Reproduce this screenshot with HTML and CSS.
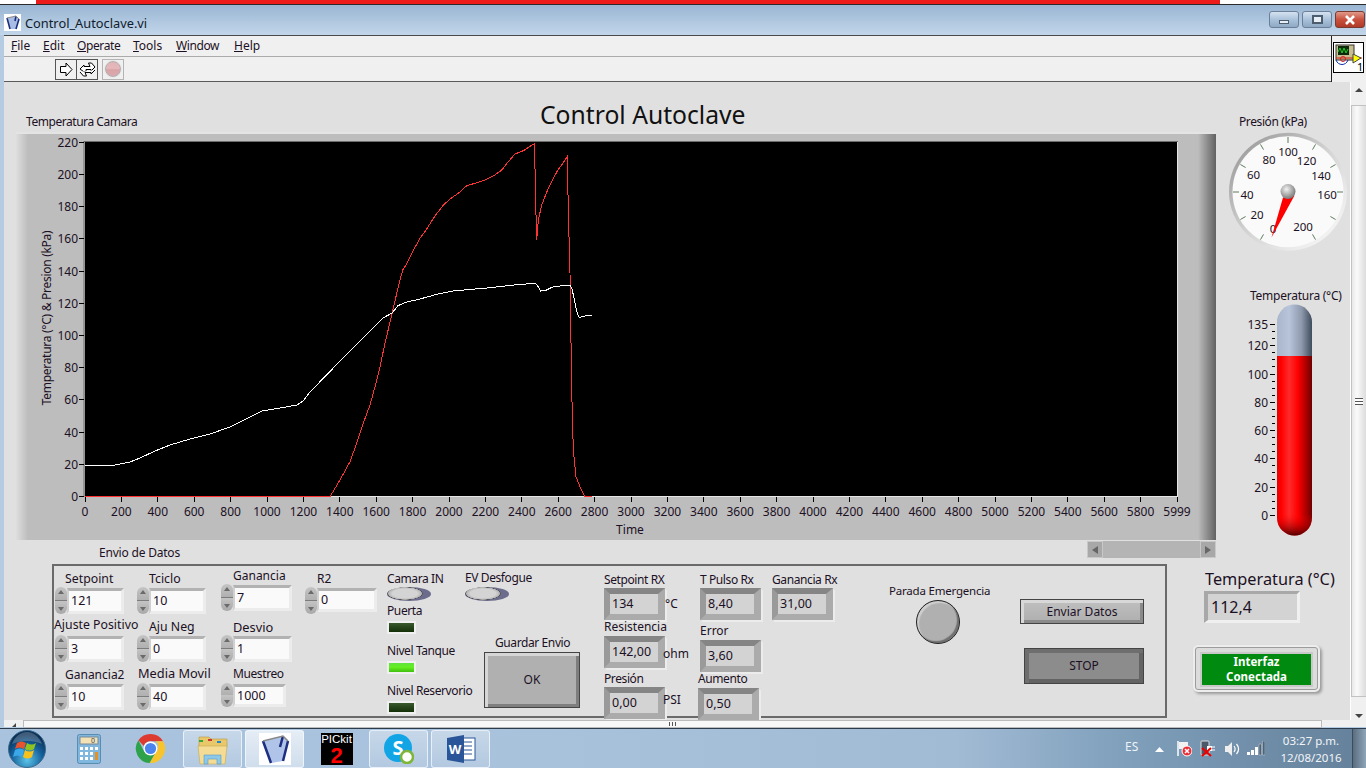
FILE: index.html
```html
<!DOCTYPE html>
<html lang="es">
<head>
<meta charset="utf-8">
<title>Control_Autoclave.vi</title>
<link rel="stylesheet" href="styles.css">
</head>
<body>
<div class="strip"><span class="strip-white"></span><span class="strip-red"></span></div>
<div class="window">
  <header class="titlebar">
    <svg class="title-icon" width="17" height="17" viewBox="0 0 17 17"><rect width="17" height="17" fill="#fff"/><path d="M3 4l9-2 3 3-3 10-6 0z" fill="#a9bde4"/><path d="M3 4l3 11M12 2l-1 5M15 5l-3 10" stroke="#1c2f80" stroke-width="1.6" fill="none"/><path d="M3 4l9-2 3 3" stroke="#8a8a8a" fill="none"/></svg>
    <span class="title-text">Control_Autoclave.vi</span>
    <div class="winbtns">
      <span class="winbtn"><i class="glyph-min"></i></span>
      <span class="winbtn"><i class="glyph-max"></i></span>
      <span class="winbtn winclose"><svg width="12" height="10" viewBox="0 0 12 10"><path d="M2 1l8 8M10 1l-8 8" stroke="#fff" stroke-width="2.6"/></svg></span>
    </div>
  </header>
  <div class="client">
    <nav class="menubar">
      <span><u>F</u>ile</span><span><u>E</u>dit</span><span class="tight"><u>O</u>perate</span><span><u>T</u>ools</span><span class="tight"><u>W</u>indow</span><span><u>H</u>elp</span>
    </nav>
    <div class="toolbar">
      <span class="tool"><svg width="14" height="15" viewBox="0 0 14 15"><path d="M1.500 4.500h5.500V1l6 6.500-6 6.500v-3.500H1.500z" fill="#fff" stroke="#000"/></svg></span>
      <span class="tool tool-second"><svg width="17" height="15" viewBox="0 0 17 15"><path d="M1 7l4-4v1.500h6L9.500 1h3l3.500 4-4 4V7.500H7v2H4.500z" fill="#fff" stroke="#000"/><path d="M16 8l-4 4v-1.500H6L7.500 14h-3L1 10" fill="#fff" stroke="#000"/></svg></span>
      <span class="tool-stop"><i></i></span>
    </div>
    <div class="vi-icon">
      <svg width="31" height="31" viewBox="0 0 31 31"><rect width="31" height="31" fill="#fff"/><rect x="3" y="3" width="18" height="15" fill="#c8bd8e" stroke="#333"/><rect x="5" y="4" width="11" height="9" fill="#0a2a0a"/><path d="M5 10l2-4 2 5 2-5 2 5 2-4" stroke="#20d020" fill="none"/><path d="M3 18c2 6 10 6 12 0" stroke="#1030b0" fill="none"/><circle cx="10" cy="17" r="2.500" fill="none" stroke="#d02020"/><path d="M3 16h26" stroke="#d02020"/><path d="M20 12l8 4-8 5z" fill="#ff0" stroke="#444"/><text class="vi-num" x="24" y="29">1</text></svg>
    </div>
    <div class="body-row">
      <main class="panel">
        <div class="top-row">
          <section class="graph-col">
            <div class="graph-head">
              <span class="graph-label">Temperatura Camara</span>
              <h1 class="main-title">Control Autoclave</h1>
            </div>
            <div class="graph">
              <svg class="graph-svg" width="1200" height="408" viewBox="16 132 1200 408">
                <rect x="85" y="142" width="1092" height="354" fill="#000"/>
                <path d="M84 141.500H1178M84 141v356" stroke="#6c6c6c" fill="none"/>
                <path d="M1177.500 142v355M85 496.500h1093" stroke="#e6e6e6" fill="none"/>
                <path class="tick" d="M79 142.500h5M79 174.500h5M79 206.500h5M79 238.500h5M79 271.500h5M79 303.500h5M79 335.500h5M79 367.500h5M79 399.500h5M79 432.500h5M79 464.500h5M79 496.500h5"/>
                <path class="tick" d="M85.500 497v5M121.500 497v5M157.500 497v5M194.500 497v5M230.500 497v5M267.500 497v5M303.500 497v5M339.500 497v5M376.500 497v5M412.500 497v5M449.500 497v5M485.500 497v5M521.500 497v5M558.500 497v5M594.500 497v5M631.500 497v5M667.500 497v5M703.500 497v5M740.500 497v5M776.500 497v5M813.500 497v5M849.500 497v5M885.500 497v5M922.500 497v5M958.500 497v5M995.500 497v5M1031.500 497v5M1067.500 497v5M1104.500 497v5M1140.500 497v5M1177.500 497v5"/>
                <g class="ylab">
                  <text x="78" y="147">220</text><text x="78" y="179">200</text><text x="78" y="211">180</text><text x="78" y="243">160</text><text x="78" y="276">140</text><text x="78" y="308">120</text><text x="78" y="340">100</text><text x="78" y="372">80</text><text x="78" y="404">60</text><text x="78" y="437">40</text><text x="78" y="469">20</text><text x="78" y="501">0</text>
                </g>
                <g class="xlab">
                  <text x="85" y="515.500">0</text><text x="121.400" y="515.500">200</text><text x="157.800" y="515.500">400</text><text x="194.200" y="515.500">600</text><text x="230.600" y="515.500">800</text><text x="267" y="515.500">1000</text><text x="303.400" y="515.500">1200</text><text x="339.800" y="515.500">1400</text><text x="376.200" y="515.500">1600</text><text x="412.600" y="515.500">1800</text><text x="449" y="515.500">2000</text><text x="485.400" y="515.500">2200</text><text x="521.800" y="515.500">2400</text><text x="558.200" y="515.500">2600</text><text x="594.600" y="515.500">2800</text><text x="631" y="515.500">3000</text><text x="667.400" y="515.500">3200</text><text x="703.800" y="515.500">3400</text><text x="740.200" y="515.500">3600</text><text x="776.600" y="515.500">3800</text><text x="813" y="515.500">4000</text><text x="849.400" y="515.500">4200</text><text x="885.800" y="515.500">4400</text><text x="922.200" y="515.500">4600</text><text x="958.600" y="515.500">4800</text><text x="995" y="515.500">5000</text><text x="1031.400" y="515.500">5200</text><text x="1067.800" y="515.500">5400</text><text x="1104.200" y="515.500">5600</text><text x="1140.600" y="515.500">5800</text><text x="1177" y="515.500">5999</text>
                  <text x="630" y="533.500">Time</text>
                </g>
                <text class="xlab axis-title" transform="translate(51 318) rotate(-90)">Temperatura (°C) &amp; Presion (kPa)</text>
                <polyline class="trace-red" points="85,496.700 330,496.700 340,480 350,461.700 356.700,443.300 363.300,423.300 370,405 375,386.700 380,366.700 385,343.300 391.700,315 398.300,286.700 402.700,270 406,265 410,256.700 415,247.300 420,238.300 426,230 435,216 443.300,205 451.700,197.700 458.300,193.300 466.700,185.700 475,183.300 483.300,180.700 495,175 501.700,170 508.300,161.700 515,154 523.300,150.700 533.300,144.300 534.500,144 535.700,203.300 536.700,240 538.300,220 541.700,205 548.300,188.300 553.300,178.300 558.300,169.300 563.300,162.700 567.300,156.700 568.300,210 570,273.300 571.700,390 573.300,450 576,476.700 580,486.700 585,496.700 592,496.700"/>
                <polyline class="trace-white" points="85,465 115,465 130,462 140,458 155,451 170,445 190,439 210,434 230,427 250,417 262,411 280,408 297,405 303,401 310,392 320,381.700 343,358 363,338 383,318 392,313 398,305.700 401.700,304 407,302 420,299 436.700,294.300 453,291 486.700,288 516.700,284.700 535,283.300 537,285 540.700,291 545,290.700 553.300,286.700 570,285 572.300,290 575,303.300 577.300,313.300 579.300,317.300 586.700,315.700 591.700,315"/>
              </svg>
            </div>
            <div class="under-graph">
              <span class="envio-label">Envio de Datos</span>
              <div class="hscroll"><span class="hs-btn"><i class="tri-left"></i></span><span class="hs-track"></span><span class="hs-btn"><i class="tri-right"></i></span></div>
            </div>
          </section>
          <aside class="gauges">
            <div class="presion-label">Presión (kPa)</div>
            <svg class="gauge" width="124" height="124" viewBox="1226 130 124 124">
              <defs>
                <linearGradient id="rim" x1="0" y1="0" x2="1" y2="1"><stop offset="0" stop-color="#8e8e8e"/><stop offset="0.5" stop-color="#d4d4d4"/><stop offset="1" stop-color="#fff"/></linearGradient>
                <radialGradient id="cap" cx="0.4" cy="0.35" r="0.7"><stop offset="0" stop-color="#f2f2f2"/><stop offset="1" stop-color="#707070"/></radialGradient>
              </defs>
              <circle cx="1288" cy="191.700" r="59" fill="url(#rim)"/>
              <circle cx="1288" cy="191.700" r="55.500" fill="#fafafa"/>
              <path class="gauge-tick" d="M1288 143v-6M1263.500 149.600l-3-5.200M1245.600 167.500l-5.200-3M1239 192h-6M1245.600 216.500l-5.200 3M1263.500 234.400l-3 5.200M1312.500 149.600l3-5.200M1330.400 167.500l5.200-3M1337 192h6M1330.400 216.500l5.200 3M1312.500 234.400l3 5.200"/>
              <g class="gauge-num">
                <text x="1288" y="156">100</text><text x="1269" y="164">80</text><text x="1253.500" y="179">60</text><text x="1247" y="199">40</text><text x="1257" y="219">20</text><text x="1273" y="233">0</text><text x="1303" y="231">200</text><text x="1327" y="199">160</text><text x="1321" y="180">140</text><text x="1306.500" y="165">120</text>
              </g>
              <path d="M1283 197.500l11.500-2L1271.500 237.500z" fill="#f00"/>
              <circle cx="1288" cy="191.500" r="7.500" fill="url(#cap)"/>
            </svg>
            <div class="termo-label">Temperatura (°C)</div>
            <svg class="termo" width="90" height="234" viewBox="1240 303 90 234">
              <defs>
                <linearGradient id="tblue"><stop offset="0" stop-color="#aab6cc"/><stop offset="0.35" stop-color="#b8c4da"/><stop offset="0.7" stop-color="#8e99ad"/><stop offset="1" stop-color="#3e4c5c"/></linearGradient>
                <linearGradient id="tred"><stop offset="0" stop-color="#e80000"/><stop offset="0.12" stop-color="#ff0000"/><stop offset="0.35" stop-color="#ff2a2a"/><stop offset="0.6" stop-color="#ff0000"/><stop offset="1" stop-color="#6e0000"/></linearGradient>
                <linearGradient id="tbot" x1="0" y1="0" x2="0" y2="1"><stop offset="0" stop-color="#ff0000" stop-opacity="0"/><stop offset="1" stop-color="#500000"/></linearGradient>
              </defs>
              <path d="M1277 356v-34a17.500 17.500 0 0 1 35 0v34z" fill="url(#tblue)"/>
              <path d="M1277 356v162a17.500 17.500 0 0 0 35 0V356z" fill="url(#tred)"/>
              <path d="M1277 514v4a17.500 17.500 0 0 0 35 0v-4z" fill="url(#tbot)"/>
              <path class="tick" d="M1270 324.500h5M1270 345.500h5M1270 374.500h5M1270 402.500h5M1270 430.500h5M1270 458.500h5M1270 487.500h5M1270 515.500h5M1272 331.500h3M1272 338.500h3M1272 352.500h3M1272 359.500h3M1272 366.500h3M1272 381.500h3M1272 388.500h3M1272 395.500h3M1272 409.500h3M1272 416.500h3M1272 423.500h3M1272 437.500h3M1272 444.500h3M1272 451.500h3M1272 465.500h3M1272 472.500h3M1272 479.500h3M1272 494.500h3M1272 501.500h3M1272 508.500h3"/>
              <g class="ylab">
                <text x="1268" y="329">135</text><text x="1268" y="350">120</text><text x="1268" y="379">100</text><text x="1268" y="407">80</text><text x="1268" y="435">60</text><text x="1268" y="463">40</text><text x="1268" y="492">20</text><text x="1268" y="520">0</text>
              </g>
            </svg>
          </aside>
        </div>
        <div class="bottom-row">
          <section class="data">
            <div class="col col1">
              <div class="field"><label class="lb big i10">Setpoint</label><div class="num"><span class="spin"></span><span class="numbox">121</span></div></div>
              <div class="field"><label class="lb up2 big neg1">Ajuste Positivo</label><div class="num"><span class="spin"></span><span class="numbox">3</span></div></div>
              <div class="field"><label class="lb i10">Ganancia2</label><div class="num"><span class="spin"></span><span class="numbox">10</span></div></div>
            </div>
            <div class="col col2">
              <div class="field"><label class="lb big i12">Tciclo</label><div class="num"><span class="spin"></span><span class="numbox">10</span></div></div>
              <div class="field"><label class="lb big i12">Aju Neg</label><div class="num"><span class="spin"></span><span class="numbox">0</span></div></div>
              <div class="field"><label class="lb up2 i1 bigger">Media Movil</label><div class="num"><span class="spin"></span><span class="numbox">40</span></div></div>
            </div>
            <div class="col col3">
              <div class="field raised"><label class="lb i12">Ganancia</label><div class="num"><span class="spin"></span><span class="numbox wide">7</span></div></div>
              <div class="field"><label class="lb bigger i12">Desvio</label><div class="num"><span class="spin"></span><span class="numbox wide">1</span></div></div>
              <div class="field"><label class="lb up1 i12 tight">Muestreo</label><div class="num"><span class="spin short"></span><span class="numbox short">1000</span></div></div>
            </div>
            <div class="col col4">
              <div class="field"><label class="lb i12">R2</label><div class="num"><span class="spin"></span><span class="numbox slim">0</span></div></div>
            </div>
            <div class="col col5">
              <label class="lb tight">Camara IN</label>
              <span class="toggle"></span>
              <div class="ledgroup"><label class="lb-plain tight">Puerta</label><span class="led"></span></div>
              <div class="ledgroup"><label class="lb-plain tight">Nivel Tanque</label><span class="led led-on"></span></div>
              <div class="ledgroup"><label class="lb-plain tight">Nivel Reservorio</label><span class="led"></span></div>
            </div>
            <div class="col col6">
              <label class="lb up1 tight">EV Desfogue</label>
              <span class="toggle"></span>
              <label class="lb-plain guardar tight">Guardar Envio</label>
              <button class="okbtn" type="button">OK</button>
            </div>
            <div class="col col7">
              <label class="lb ind-first tight">Setpoint RX</label>
              <div class="indrow"><span class="ind">134</span><span class="unit">°C</span></div>
              <label class="lb ind-gap16">Resistencia</label>
              <div class="indrow"><span class="ind">142,00</span><span class="unit unit-ohm">ohm</span></div>
              <label class="lb ind-gap19 tight">Presión</label>
              <div class="indrow"><span class="ind">0,00</span><span class="unit unit-psi">PSI</span></div>
            </div>
            <div class="col col8">
              <label class="lb ind-first tight">T Pulso Rx</label>
              <span class="ind">8,40</span>
              <label class="lb ind-gap20">Error</label>
              <span class="ind">3,60</span>
              <label class="lb ind-gap16 shift tight">Aumento</label>
              <span class="ind shift">0,50</span>
            </div>
            <div class="col col9">
              <label class="lb ind-first tight">Ganancia Rx</label>
              <span class="ind">31,00</span>
            </div>
            <div class="col col10">
              <label class="lb-plain parada">Parada Emergencia</label>
              <span class="estop"></span>
            </div>
            <div class="col col11">
              <button class="btn btn-send" type="button">Enviar Datos</button>
              <button class="btn btn-stop" type="button">STOP</button>
            </div>
          </section>
          <aside class="side">
            <div class="big-label">Temperatura (°C)</div>
            <div class="big-ind">112,4</div>
            <div class="conn"><div class="conn-in">Interfaz<br>Conectada</div></div>
          </aside>
        </div>
      </main>
      <div class="vscroll">
        <i class="tri-up"></i>
        <div class="vs-thumb"><i class="grip"></i></div>
        <i class="tri-down"></i>
      </div>
    </div>
    <div class="bottom-scroll">
      <i class="corner"></i>
      <div class="bs-thumb"><i class="vgrip"></i></div>
    </div>
  </div>
</div>
<footer class="taskbar">
  <svg class="orb" width="38" height="38" viewBox="0 0 38 38">
    <defs><radialGradient id="orbg" cx="0.5" cy="0.8" r="0.7"><stop offset="0" stop-color="#5bc4e8"/><stop offset="0.6" stop-color="#14609c"/><stop offset="1" stop-color="#0b2f55"/></radialGradient></defs>
    <circle cx="19" cy="19" r="18.500" fill="url(#orbg)" stroke="#3a6a8c"/>
    <path d="M9 13c3-2 6-2 9 0l-2 6c-3-2-6-2-9 0z" fill="#e8522c"/><path d="M19 13c3 2 6 2 9 0l-2 6c-3 2-6 2-9 0z" fill="#8fc31f"/><path d="M7 20c3-2 6-2 9 0l-2 7c-3-2-6-2-9 0z" fill="#3aa8e8"/><path d="M17 20c3 2 6 2 9 0l-2 7c-3 2-6 2-9 0z" fill="#f7c11e"/>
    <path d="M4 14c3-8 9-12 15-12s12 4 15 12c-8-4-22-4-30 0z" fill="#fff" fill-opacity="0.22"/>
  </svg>
  <div class="slot"><svg width="24" height="30" viewBox="0 0 24 30"><rect x="0.500" y="0.500" width="23" height="29" rx="2" fill="#7fb7de" stroke="#5a8cb0"/><rect x="3" y="3" width="18" height="7" fill="#f2e2b6" stroke="#7a8a9a"/><text class="calc-num" x="16" y="9">0</text><path d="M3 13h3v3H3zM8 13h3v3H8zM13 13h3v3h-3zM18 13h3v3h-3zM3 18h3v3H3zM8 18h3v3H8zM13 18h3v3h-3zM3 23h3v3H3zM8 23h3v3H8zM13 23h3v3h-3z" fill="#fff"/><path d="M18 18h3v8h-3z" fill="#e89020"/></svg></div>
  <div class="slot"><svg width="31" height="31" viewBox="0 0 32 32"><path d="M16 1a15 15 0 0 1 13 7.500H16a7.500 7.500 0 0 0-7 4.800L3.500 7.500A15 15 0 0 1 16 1z" fill="#dd3b2f"/><path d="M29 8.500A15 15 0 0 1 15 31l6.500-11.500a7.500 7.500 0 0 0 0-11z" fill="#f6c42c"/><path d="M3.500 7.500L9.500 19a7.500 7.500 0 0 0 12 .5L15 31A15 15 0 0 1 3.500 7.500z" fill="#2ea24a"/><circle cx="16" cy="16" r="7.200" fill="#fff"/><circle cx="16" cy="16" r="5.800" fill="#4a84ee"/></svg></div>
  <div class="slot active"><svg width="33" height="32" viewBox="0 0 33 32"><path d="M3 4h10l2 2h16v8H3z" fill="#e8c868" stroke="#b89840" stroke-width="0.600"/><path d="M3 7h4v2H3z" fill="#3a3"/><path d="M12 6h4v2h-4z" fill="#c33"/><path d="M21 8h4v2h-4z" fill="#28c"/><path d="M2 13h29l-2 18H4z" fill="#f4dc94" stroke="#c8a850" stroke-width="0.600"/><path d="M8 31V22h17v9h-4v-5H12v5z" fill="#8cc8e8" stroke="#5a9cc8" stroke-width="0.600"/></svg></div>
  <div class="slot active hot"><svg class="lv-big" width="32" height="32" viewBox="0 0 32 32"><rect width="32" height="32" fill="#fff"/><path d="M4 8l20-5 5 5-5 20-12 2z" fill="#b0c4ea"/><path d="M4 8l8 22M24 3l-3 11M29 8l-5 20" stroke="#1c2f80" stroke-width="2.500" fill="none"/><path d="M4 8l20-5 5 5" stroke="#888" stroke-width="1.500" fill="none"/></svg></div>
  <div class="slot"><div class="pickit"><span class="pk-text">PICkit</span><span class="pk-num">2</span></div></div>
  <div class="slot active"><svg width="31" height="31" viewBox="0 0 31 31"><circle cx="15" cy="15" r="14" fill="#12a5e6"/><text class="skype-s" x="15" y="22">S</text><circle cx="24" cy="24" r="6" fill="#fff" stroke="#7fb63a" stroke-width="2.500"/></svg></div>
  <div class="slot active"><svg width="30" height="30" viewBox="0 0 30 30"><rect x="13" y="4" width="16" height="22" fill="#fff" stroke="#2a5699"/><path d="M16 8h10M16 12h10M16 16h10M16 20h10" stroke="#2a5699"/><path d="M1 4l17-3v28L1 26z" fill="#2a5699"/><text class="word-w" x="9" y="20">W</text></svg></div>
  <div class="tray">
    <span class="t-lang">ES</span>
    <svg class="t-arrow" width="9" height="5" viewBox="0 0 9 5"><path d="M0 5l4.500-5L9 5z" fill="#fff"/></svg>
    <svg class="t-flag" width="16" height="17" viewBox="0 0 16 17"><path d="M2 1v15" stroke="#fff" stroke-width="1.500"/><path d="M3 2h9v7H3z" fill="#f2f2f2"/><circle cx="11" cy="11" r="5" fill="#e8303a" stroke="#fff"/><path d="M9 9l4 4M13 9l-4 4" stroke="#fff" stroke-width="1.500"/></svg>
    <svg class="t-plug" width="16" height="17" viewBox="0 0 16 17"><rect x="1" y="1" width="8" height="14" rx="1" fill="#4a5a6a" stroke="#ddd"/><path d="M7 6h5v5H7z" fill="#fff"/><path d="M12 7h3M12 10h3" stroke="#fff"/><path d="M2 8l9 8M11 8l-9 8" stroke="#e00" stroke-width="2"/></svg>
    <svg class="t-spk" width="16" height="16" viewBox="0 0 16 16"><path d="M1 5h3l4-4v14l-4-4H1z" fill="#eee"/><path d="M10 5c1.500 2 1.500 4 0 6M12.500 3c2.500 3 2.500 7 0 10" stroke="#fff" fill="none" stroke-width="1.200"/></svg>
    <svg class="t-sig" width="18" height="15" viewBox="0 0 18 15"><path d="M0 11h3v3H0z" fill="#fff"/><path d="M4 9h3v5H4z" fill="#fff"/><path d="M8 6h3v8H8z" fill="#fff"/><path d="M12 3h2.500v11H12zM15.500 0H18v14h-2.500z" fill="#4f6375" stroke="#c8d2dc" stroke-width="0.500"/></svg>
    <div class="clock"><span>03:27 p.m.</span><span>12/08/2016</span></div>
    <span class="show-desktop"></span>
  </div>
</footer>
</body>
</html>
```

FILE: styles.css
```css
* { box-sizing: border-box; }
html, body { margin: 0; padding: 0; width: 1366px; height: 768px; overflow: hidden; }
body { font-family: "Noto Sans", "DejaVu Sans", sans-serif; font-size: 12px; color: #1c1024; background: #e0e0e0; }
label, span, div { line-height: 14px; }
.tight { letter-spacing: -0.4px; }
.big { font-size: 12.300px; }
.bigger { font-size: 12.800px; }
.neg1 { margin-left: -1px; }

.strip { height: 5px; display: flex; background: #fff; border-bottom: 1px solid #2a2a2a; }
.strip-white { width: 36px; }
.strip-red { width: 1184px; background: #ec1c1c; }

.window { height: 723px; display: flex; flex-direction: column; position: relative; background: #b4cbe2; }
.titlebar { height: 30px; flex: none; display: flex; align-items: center; padding: 5px 4px 0; background: linear-gradient(#9ab6d3, #c2d6ea); }
.title-icon { flex: none; }
.title-text { margin-left: 4px; font-size: 12.800px; color: #10202c; }
.winbtns { margin-left: auto; display: flex; gap: 3px; margin-bottom: 6px; }
.winbtn { width: 30px; height: 17px; border: 1px solid #6b8098; border-radius: 3px; background: linear-gradient(#d5e2f0, #aac2da 50%, #8ea9c5); display: flex; align-items: center; justify-content: center; }
.winclose { width: 30px; margin-right: -3px; background: linear-gradient(#e09a8a, #c9513e 50%, #b03a28); border-color: #7a3a30; }
.glyph-min { width: 10px; height: 4px; margin-top: 5px; background: #e8eef5; border: 1px solid #4c5d70; }
.glyph-max { width: 11px; height: 9px; border: 2px solid #4c5d70; background: #e8eef5; }

.client { margin-left: 4px; flex: 1; display: flex; flex-direction: column; position: relative; min-height: 0; border-top: 1px solid #4a4a4a; }
.menubar { height: 21px; flex: none; display: grid; grid-template-columns: 32px 34px 56px 43px 58px auto; align-items: center; padding-left: 7px; background: #f0f0f0; border-bottom: 1px solid #ababab; }
.menubar span { color: #1c1024; }
.toolbar { height: 25px; flex: none; display: flex; align-items: center; padding-left: 51px; background: #f0f0f0; border-bottom: 1px solid #5a5a5a; }
.tool { width: 22px; height: 21px; border: 1px solid #555; display: flex; align-items: center; justify-content: center; background: #f0f0f0; }
.tool-second { margin-left: -1px; }
.tool-stop { width: 22px; height: 21px; margin-left: 4px; border: 1px solid #b4b4b4; display: flex; align-items: center; justify-content: center; }
.tool-stop i { width: 16px; height: 16px; border-radius: 50%; background: linear-gradient(#e2b4b8, #e6b8bc 45%, #d8a4a8 55%, #dcaaae); border: 1px solid #b0b0b0; box-shadow: 0 0 0 1px #e8e8e8; }

.vi-icon { position: absolute; left: 1327px; top: 0; width: 35px; height: 46px; background: #f0f0f0; border-left: 1px solid #222; padding: 6px 0 0 1px; }
.vi-icon svg { display: block; outline: 1px solid #000; outline-offset: -1px; }
.vi-num { font-size: 11px; fill: #000; }

.body-row { height: 638px; flex: none; display: flex; }
.panel { width: 1346px; background: #e0e0e0; padding-left: 12px; display: flex; flex-direction: column; }
.top-row { height: 482px; display: flex; flex: none; }
.graph-col { width: 1200px; flex: none; display: flex; flex-direction: column; }
.graph-head { height: 50px; flex: none; display: flex; align-items: flex-end; padding: 0 0 3px 10px; }
.graph-label { flex: none; width: 514px; letter-spacing: -0.450px; }
.main-title { margin: 0; font-size: 24.700px; font-weight: 400; line-height: 30px; color: #111; position: relative; top: 1px; white-space: nowrap; }
.graph { height: 408px; flex: none; background: linear-gradient(90deg, #dedede, #bdbdbd 12px, #bdbdbd calc(100% - 18px), #616161); border-top: 2px solid #e4e4e4; position: relative; }
.graph-svg { display: block; margin-top: -2px; }
.tick { stroke: #000; stroke-width: 1; fill: none; }
.ylab text { text-anchor: end; font-size: 12px; fill: #1c1024; }
.xlab text, text.xlab { text-anchor: middle; font-size: 12px; fill: #1c1024; }
.axis-title { letter-spacing: -0.280px; }
.trace-red { fill: none; stroke: #ff3333; stroke-width: 1; shape-rendering: crispEdges; }
.trace-white { fill: none; stroke: #fff; stroke-width: 1; shape-rendering: crispEdges; }
.under-graph { height: 24px; flex: none; display: flex; align-items: flex-start; position: relative; }
.envio-label { margin: 6px 0 0 83px; letter-spacing: -0.200px; }
.hscroll { margin: 1px 0 0 auto; width: 129px; height: 17px; display: flex; background: #b4b4b4; }
.hs-btn { width: 16px; flex: none; background: #a8a8a8; border: 1px solid #c8c8c8; display: flex; align-items: center; justify-content: center; }
.hs-track { flex: 1; }
.tri-left { border: 4px solid transparent; border-right: 6px solid #666; border-left: 0; }
.tri-right { border: 4px solid transparent; border-left: 6px solid #666; border-right: 0; }

.gauges { flex: 1; position: relative; display: flex; flex-direction: column; padding-left: 10px; }
.presion-label { margin: 33px 0 0 13px; height: 14px; letter-spacing: -0.400px; }
.gauge { display: block; margin-top: 1px; flex: none; }
.gauge-tick { stroke: #5c7a5c; stroke-width: 1; fill: none; }
.gauge-num text { text-anchor: middle; font-size: 11.500px; fill: #1c1024; }
.termo-label { margin: 35px 0 0 24px; height: 14px; white-space: nowrap; letter-spacing: -0.250px; }
.termo { display: block; margin-left: 14px; flex: none; }

.bottom-row { height: 154px; flex: none; display: flex; }
.data { width: 1115px; height: 154px; margin-left: 36px; flex: none; border: 2px solid #6a6a6a; display: flex; padding-left: 1px; position: relative; }
.col { flex: none; display: flex; flex-direction: column; }
.col1 { width: 82px; }
.col2, .col3 { width: 84px; }
.col4 { width: 82px; }
.col5 { width: 78px; }
.col6 { width: 139px; }
.col7 { width: 96px; }
.col8 { width: 72px; }
.col9 { width: 117px; }
.col10 { width: 131px; }
.col11 { width: 124px; }

.field { height: 48px; flex: none; display: flex; flex-direction: column; }
.field.raised { margin-top: -3px; margin-bottom: 3px; }
.lb { height: 21px; flex: none; display: flex; align-items: flex-end; padding-bottom: 1px; white-space: nowrap; }
.lb.up1 { padding-bottom: 2px; }
.lb.up2 { padding-bottom: 3px; }
.i1 { margin-left: 1px; }
.i10 { margin-left: 10px; }
.i12 { margin-left: 12px; }
.lb-plain { display: block; height: 14px; white-space: nowrap; }

.num { display: flex; height: 27px; }
.spin { width: 12px; flex: none; border-radius: 6px; background: linear-gradient(#c4c4c4, #b0b0b0 48%, #7c7c7c 50%, #c4c4c4 52%, #a8a8a8); position: relative; }
.spin::before, .spin::after { content: ""; position: absolute; left: 3px; border: 3px solid transparent; }
.spin::before { top: 3px; border-bottom: 4px solid #6a6a6a; border-top: 0; }
.spin::after { bottom: 3px; border-top: 4px solid #6a6a6a; border-bottom: 0; }
.numbox { width: 57px; height: 26px; margin-top: 1px; background: #fafafa; border-style: solid; border-width: 3px 3px 3px 2px; border-color: #b2b2b2 #ececec #ececec #d0d0d0; padding: 0 0 0 2px; display: flex; align-items: center; font-size: 12.500px; }
.numbox.wide { width: 59px; }
.numbox.slim { width: 60px; height: 24px; }
.numbox.short { width: 53px; height: 23px; }
.spin.short { height: 24px; }

.toggle { width: 44px; height: 14px; flex: none; border-radius: 50%; background: radial-gradient(ellipse 18px 6.500px at 18px 6.500px, #d4d4d4 0 70%, #b4b4b4 92%, #4a4a4a 96%, #6c6c8c 100%); background-color: #6c6c8c; }
.ledgroup { height: 40px; flex: none; padding-top: 3px; }
.ledgroup .lb-plain { margin-bottom: 3px; }
.led { display: block; width: 29px; height: 13px; border: 2px solid #f0f0f0; background: linear-gradient(#3a5a2c, #143008); }
.led-on { background: linear-gradient(#60e040, #66f020 45%, #40c010); }
.guardar { margin: 35px 0 2px 30px; }
.okbtn { width: 96px; height: 56px; margin-left: 19px; flex: none; font: inherit; color: #1c1024; border: 1px solid #444; background: #b0b0b0; box-shadow: inset 3px 3px 0 #d6d6d6, inset -3px -3px 0 #7e7e7e; padding: 0; }

.ind-first { height: 22px; padding-bottom: 1px; }
.ind-gap16 { height: 16px; padding-bottom: 2px; }
.ind-gap19 { height: 19px; padding-bottom: 1px; }
.ind-gap20 { height: 20px; padding-bottom: 2px; }
.indrow { display: flex; flex: none; height: 32px; }
.ind { flex: none; display: flex; align-items: center; width: 61px; height: 32px; padding-left: 2px; background: #d3d3d3; border-style: solid; border-width: 6px 7px 6px 6px; border-color: #858585 #ababab #ababab #9a9a9a; box-shadow: 2px 2px 0 #ececec; font-size: 12.500px; }
.unit { align-self: center; margin-left: 0; white-space: nowrap; }
.unit-ohm { margin-top: 4px; margin-left: -2px; }
.unit-psi { margin-top: -6px; margin-left: -2px; }
.shift { margin-left: -2px; }
.parada { margin-top: 18px; font-size: 11.500px; letter-spacing: -0.200px; }
.estop { width: 44px; height: 44px; margin: 2px 0 0 27px; border-radius: 50%; background: #b0b0b0; border: 1px solid #222; box-shadow: inset -2px -2px 1px #707070, inset 2px 2px 1px #cecece; }
.btn { font: inherit; color: #1c1024; padding: 0; flex: none; border: 1px solid #444; }
.btn-send { width: 124px; height: 25px; margin-top: 33px; background: linear-gradient(#c0c0c0, #aeaeae); box-shadow: inset 3px 3px 0 #d8d8d8, inset -3px -3px 0 #8a8a8a; }
.btn-stop { width: 120px; height: 36px; margin: 24px 0 0 4px; background: #8c8c8c; box-shadow: inset 4px 4px 0 #6e6e6e, inset -4px -4px 0 #636363; }

.side { flex: 1; padding: 5px 0 0 37px; }
.big-label { font-size: 16.300px; line-height: 20px; height: 20px; white-space: nowrap; margin-left: 1px; }
.big-ind { width: 96px; height: 32px; margin-top: 2px; background: #d3d3d3; border-style: solid; border-width: 3px 3px 3px 4px; border-color: #a8a8a8 #f0f0f0 #f0f0f0 #a8a8a8; font-size: 16px; display: flex; align-items: center; padding-left: 3px; }
.conn { width: 127px; height: 47px; margin: 22px 0 0 -11px; padding: 5px; border: 2px solid #ededed; border-radius: 5px; background: #dcdcdc; box-shadow: 2px 2px 3px #9a9a9a, inset 0 0 0 1px #9c9c9c; }
.conn-in { height: 35px; background: #008a10; border: 2px solid #c8c8c8; color: #fff; font-weight: 700; font-size: 11.500px; line-height: 15px; text-align: center; }

.vscroll { width: 16px; flex: none; height: 638px; background: #f0f0f0; position: relative; display: flex; flex-direction: column; align-items: center; border-left: 1px solid #fff; }
.vs-thumb { width: 16px; height: 592px; margin-top: 13px; flex: none; background: linear-gradient(90deg, #e8e8e8, #fafafa 35%, #dcdcdc); border: 1px solid #c2c2c2; display: flex; align-items: center; justify-content: center; }
.tri-up { margin-top: 6px; width: 0; height: 0; border: 4px solid transparent; border-bottom: 4px solid #444; border-top: 0; }
.tri-down { margin-top: 17px; width: 0; height: 0; border: 4px solid transparent; border-top: 4px solid #444; border-bottom: 0; }
.grip { width: 8px; height: 7px; border-top: 1px solid #555; border-bottom: 1px solid #555; background: linear-gradient(#fff 0 2px, #555 2px 3px, #fff 3px); }

.bottom-scroll { height: 7px; flex: none; display: flex; background: #f0f0f0; position: relative; }
.bs-thumb { margin-left: 19px; width: 1299px; height: 8px; background: #f8f8f8; border: 1px solid #bcbcbc; display: flex; justify-content: center; }
.vgrip { width: 7px; height: 4px; background: repeating-linear-gradient(90deg, #555 0 1px, transparent 1px 3px); margin-top: 1px; }
.corner { position: absolute; left: 8px; top: 3px; width: 0; height: 0; border-style: solid; border-width: 0 0 4px 4px; border-color: transparent transparent #444 transparent; }

.taskbar { height: 40px; display: flex; align-items: center; padding-left: 8px; border-top: 1px solid #2c3c4c; background: linear-gradient(90deg, #a9c3df, #a9c2dc 40%, #a2bbd5 70%, #80a0bc 82%, #64809a); overflow: hidden; }
.orb { flex: none; margin-right: 13px; }
.slot { width: 59px; height: 38px; margin-right: 3px; flex: none; display: flex; align-items: center; justify-content: center; border-radius: 3px; border: 1px solid transparent; }
.slot.active { background: linear-gradient(rgba(255,255,255,.35), rgba(255,255,255,.12)); border-color: rgba(245,250,255,.75); }
.slot.hot { background: linear-gradient(rgba(255,255,255,.7), rgba(255,255,255,.45)); }
.calc-num { font-size: 7px; fill: #445; text-anchor: middle; }
.skype-s { font-size: 20px; font-weight: 700; fill: #fff; text-anchor: middle; }
.word-w { font-size: 13px; font-weight: 700; fill: #fff; text-anchor: middle; }
.pickit { width: 32px; height: 32px; background: #000; display: flex; flex-direction: column; align-items: center; }
.pk-text { font-size: 11.500px; line-height: 13px; color: #fff; font-family: "Liberation Sans", sans-serif; }
.pk-num { font-size: 22px; line-height: 19px; color: #f00; font-weight: 700; font-family: "Liberation Sans", sans-serif; }

.tray { margin-left: auto; display: flex; align-items: center; height: 40px; color: #fff; flex: none; }
.t-lang { width: 30px; color: #eef3f8; font-size: 12px; margin-top: -4px; }
.t-arrow { flex: none; margin-top: 2px; }
.t-flag { margin-left: 12px; flex: none; }
.t-plug { margin-left: 8px; flex: none; }
.t-spk { margin-left: 8px; flex: none; }
.t-sig { margin-left: 7px; flex: none; }
.clock { width: 60px; margin-left: 16px; flex: none; display: flex; flex-direction: column; align-items: center; font-size: 11.500px; color: #f2f5f8; }
.clock span { line-height: 17px; white-space: nowrap; }
.show-desktop { width: 14px; height: 39px; margin-left: 11px; flex: none; background: linear-gradient(90deg, #5a6e80, #8fa5b8); border-left: 1px solid #3c4c5a; }
```
